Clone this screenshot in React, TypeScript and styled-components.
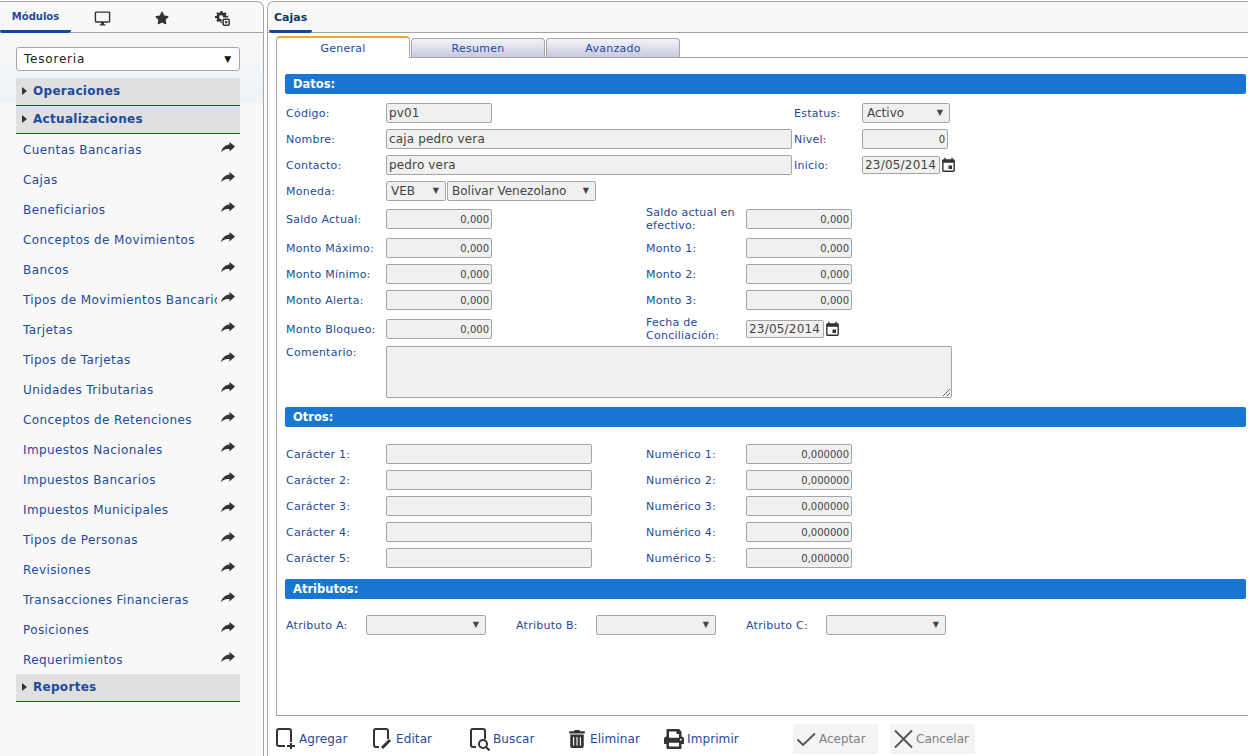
import { ReactNode } from "react";
import styled, { createGlobalStyle } from "styled-components";
import { FaStar, FaPrint, FaTrashAlt } from "react-icons/fa";
import { MdOutlineDesktopWindows, MdEvent } from "react-icons/md";

const GlobalStyle = createGlobalStyle`
  html, body { margin: 0; padding: 0; background: #fff; }
  * { box-sizing: border-box; }
  body { font-family: "DejaVu Sans", Verdana, sans-serif; font-size: 11px; }
`;

const menuItems = [
  "Cuentas Bancarias",
  "Cajas",
  "Beneficiarios",
  "Conceptos de Movimientos",
  "Bancos",
  "Tipos de Movimientos Bancarios",
  "Tarjetas",
  "Tipos de Tarjetas",
  "Unidades Tributarias",
  "Conceptos de Retenciones",
  "Impuestos Nacionales",
  "Impuestos Bancarios",
  "Impuestos Municipales",
  "Tipos de Personas",
  "Revisiones",
  "Transacciones Financieras",
  "Posiciones",
  "Requerimientos",
];

function GearIcon() {
  return (
    <svg width="15" height="15" viewBox="0 0 16 16" fill="#333">
      <path d="M6 0h2l.3 1.7 1.3.5L11 1.2l1.4 1.4-1 1.4.4 1H14v2H8.5V5.5a2.2 2.2 0 1 0-3 3H7V13H6l-.3-1.7-1.3-.5L3 11.8 1.4 10.4l1-1.4-.5-1.3L0 7.4v-2l1.9-.3.5-1.3-1-1.4L2.8 1l1.4 1 1.3-.5z" />
      <rect x="8.7" y="8.7" width="6.4" height="6.4" rx="1" fill="none" stroke="#333" strokeWidth="1.6" />
      <rect x="10.7" y="10.7" width="2.4" height="2.4" />
    </svg>
  );
}

function ShareIcon() {
  return (
    <svg width="14" height="10" viewBox="0 0 14 10" fill="#333">
      <path d="M8.500 0L14 4.500 8.500 9.500V7C5 7 2.500 7.500 0 10 1 6 4 3 8.500 2.500z" />
    </svg>
  );
}

function AddIcon() {
  return (
    <svg width="20" height="22" viewBox="0 0 20 22" fill="none" stroke="#333" strokeWidth="2">
      <path d="M9 18H3a2 2 0 0 1-2-2V3a2 2 0 0 1 2-2h10a2 2 0 0 1 2 2v11" />
      <path d="M15 15v6M11 18h8" />
    </svg>
  );
}

function EditIcon() {
  return (
    <svg width="20" height="22" viewBox="0 0 20 22" fill="none" stroke="#333" strokeWidth="2">
      <path d="M6 19H3a2 2 0 0 1-2-2V3a2 2 0 0 1 2-2h10a2 2 0 0 1 2 2v8" />
      <path d="M9 20l8-8" strokeWidth="3" />
    </svg>
  );
}

function SearchIcon() {
  return (
    <svg width="20" height="23" viewBox="0 0 20 23" fill="none" stroke="#333" strokeWidth="2">
      <path d="M6 19H3a2 2 0 0 1-2-2V3a2 2 0 0 1 2-2h10a2 2 0 0 1 2 2v8" />
      <circle cx="13" cy="16" r="4" />
      <path d="M16 19l3.500 3.500" />
    </svg>
  );
}

function CheckIcon() {
  return (
    <svg width="20" height="20" viewBox="0 0 20 20" fill="none" stroke="#555" strokeWidth="1.9">
      <path d="M1.500 10.500L7 16 19 4.500" />
    </svg>
  );
}

function CrossIcon() {
  return (
    <svg width="20" height="20" viewBox="0 0 20 20" fill="none" stroke="#555" strokeWidth="1.9">
      <path d="M2 1.500L19 18.500M19 1.500L2 18.500" />
    </svg>
  );
}

const SELECT_CARET = "\u25BC";

function Select({ width, value }: { width: number; value: string }) {
  return (
    <SelectBox $width={width}>
      <span>{value}</span>
      <Caret>{SELECT_CARET}</Caret>
    </SelectBox>
  );
}

function DateField({ value }: { value: string }) {
  return (
    <DateWrap>
      <DateInput readOnly value={value} />
      <MdEvent size={17} color="#333" />
    </DateWrap>
  );
}

function Section({ title, children }: { title: string; children?: ReactNode }) {
  return (
    <>
      <SectionBar>{title}</SectionBar>
      <SectionBody>{children}</SectionBody>
    </>
  );
}

export default function App() {
  const amounts: [string, string][] = [
    ["Monto Máximo:", "Monto 1:"],
    ["Monto Mínimo:", "Monto 2:"],
    ["Monto Alerta:", "Monto 3:"],
  ];

  return (
    <>
      <GlobalStyle />
      <Page>
        <Sidebar>
          <SideTabs>
            <ActiveTab>Módulos</ActiveTab>
            <IconTab><MdOutlineDesktopWindows size={17} color="#333" /></IconTab>
            <IconTab><FaStar size={14} color="#333" /></IconTab>
            <IconTab><GearIcon /></IconTab>
          </SideTabs>
          <SideBody>
            <ModuleSelect>
              <span>Tesoreria</span>
              <ModuleCaret>{SELECT_CARET}</ModuleCaret>
            </ModuleSelect>
            <AccordionHead><Tri />Operaciones</AccordionHead>
            <AccordionHead><Tri />Actualizaciones</AccordionHead>
            {menuItems.map((item) => (
              <MenuItem key={item}>
                <MenuText>{item}</MenuText>
                <ShareIcon />
              </MenuItem>
            ))}
            <AccordionHead><Tri />Reportes</AccordionHead>
          </SideBody>
        </Sidebar>

        <Main>
          <MainTabs>
            <MainTab>Cajas</MainTab>
          </MainTabs>
          <Content>
            <FormTabs>
              <FormTab $active>General</FormTab>
              <FormTab>Resumen</FormTab>
              <FormTab>Avanzado</FormTab>
            </FormTabs>
            <FormBody>
              <Section title="Datos:">
                <TopRow>
                  <Label>Código:</Label>
                  <TextInput $width={106} readOnly value="pv01" />
                  <Label>Estatus:</Label>
                  <Select width={88} value="Activo" />
                </TopRow>
                <TopRow>
                  <Label>Nombre:</Label>
                  <TextInput $width={406} readOnly value="caja pedro vera" />
                  <Label>Nivel:</Label>
                  <NumberInput $width={86} readOnly value="0" />
                </TopRow>
                <TopRow>
                  <Label>Contacto:</Label>
                  <TextInput $width={406} readOnly value="pedro vera" />
                  <Label>Inicio:</Label>
                  <DateField value="23/05/2014" />
                </TopRow>
                <TopRow>
                  <Label>Moneda:</Label>
                  <CurrencyPair>
                    <Select width={60} value="VEB" />
                    <Select width={149} value="Bolivar Venezolano" />
                  </CurrencyPair>
                </TopRow>

                <AmountRow $top={8}>
                  <Label>Saldo Actual:</Label>
                  <NumberInput $width={106} readOnly value="0,000" />
                  <WrapLabel>Saldo actual en efectivo:</WrapLabel>
                  <NumberInput $width={106} readOnly value="0,000" />
                </AmountRow>
                {amounts.map(([left, right], i) => (
                  <AmountRow key={left} $top={i === 0 ? 9 : 6}>
                    <Label>{left}</Label>
                    <NumberInput $width={106} readOnly value="0,000" />
                    <Label>{right}</Label>
                    <NumberInput $width={106} readOnly value="0,000" />
                  </AmountRow>
                ))}
                <AmountRow $top={9}>
                  <Label>Monto Bloqueo:</Label>
                  <NumberInput $width={106} readOnly value="0,000" />
                  <WrapLabel>Fecha de Conciliación:</WrapLabel>
                  <DateField value="23/05/2014" />
                </AmountRow>
                <CommentRow>
                  <Label>Comentario:</Label>
                  <Comment readOnly />
                </CommentRow>
              </Section>

              <Section title="Otros:">
                <ExtraRows>
                  {[1, 2, 3, 4, 5].map((n) => (
                    <AmountRow key={n} $top={n === 1 ? 0 : 6}>
                      <Label>{`Carácter ${n}:`}</Label>
                      <TextInput $width={206} readOnly value="" />
                      <Label>{`Numérico ${n}:`}</Label>
                      <NumberInput $width={106} readOnly value="0,000000" />
                    </AmountRow>
                  ))}
                </ExtraRows>
              </Section>

              <Section title="Atributos:">
                <AttrRow>
                  <Label>Atributo A:</Label>
                  <Select width={120} value="" />
                  <Label>Atributo B:</Label>
                  <Select width={120} value="" />
                  <Label>Atributo C:</Label>
                  <Select width={120} value="" />
                </AttrRow>
              </Section>
            </FormBody>
          </Content>
          <Toolbar>
            <ToolButton><ToolIcon><AddIcon /></ToolIcon>Agregar</ToolButton>
            <ToolButton><ToolIcon><EditIcon /></ToolIcon>Editar</ToolButton>
            <ToolButton><ToolIcon><SearchIcon /></ToolIcon>Buscar</ToolButton>
            <ToolButton><ToolIcon><FaTrashAlt size={18} color="#333" /></ToolIcon>Eliminar</ToolButton>
            <ToolButton><ToolIcon><FaPrint size={20} color="#333" /></ToolIcon>Imprimir</ToolButton>
            <ConfirmGroup>
              <DisabledButton><CheckIcon />Aceptar</DisabledButton>
              <DisabledButton><CrossIcon />Cancelar</DisabledButton>
            </ConfirmGroup>
          </Toolbar>
        </Main>
      </Page>
    </>
  );
}

const Page = styled.div`
  display: flex;
  gap: 3px;
  height: 756px;
  width: 1248px;
  overflow: hidden;
  padding-top: 1px;
  background: #fff;
`;

const Sidebar = styled.aside`
  width: 264px;
  flex: none;
  border: 1px solid #a5a5a5;
  border-left: none;
  border-bottom: none;
  border-top-right-radius: 7px;
  background: #f8f8f8;
  display: flex;
  flex-direction: column;
`;

const SideTabs = styled.div`
  height: 31px;
  flex: none;
  display: flex;
  border-bottom: 1px solid #a5a5a5;
`;

const ActiveTab = styled.div`
  width: 71px;
  height: 31px;
  padding-top: 9px;
  text-align: center;
  font-size: 10px;
  font-weight: 700;
  color: #24499a;
  border-bottom: 3px solid #0d47a1;
  border-radius: 0 0 3px 3px;
  margin-right: 1px;
`;

const IconTab = styled.div`
  width: 60px;
  display: flex;
  align-items: center;
  justify-content: center;
  padding-top: 2px;
`;

const SideBody = styled.div`
  flex: 1;
  padding: 14px 23px 0 16px;
  background: linear-gradient(#f8f8f8, #eef3f8) no-repeat 0 0 / 100% 70px;
`;

const ModuleSelect = styled.div`
  height: 24px;
  margin-bottom: 7px;
  padding: 0 7px;
  display: flex;
  align-items: center;
  justify-content: space-between;
  font-size: 12px;
  letter-spacing: 0.8px;
  color: #222;
  background: #fff;
  border: 1px solid #a5a5a5;
  border-radius: 3px;
`;

const ModuleCaret = styled.span`
  font-size: 9px;
  color: #111;
`;

const AccordionHead = styled.div`
  height: 28px;
  display: flex;
  align-items: center;
  gap: 6px;
  padding: 0 0 1px 6px;
  font-size: 12px;
  font-weight: 700;
  letter-spacing: 0.3px;
  color: #1c4a9c;
  background: #e0e0e0;
  border-bottom: 1px solid #0d47a1;
`;

const Tri = styled.i`
  width: 0;
  height: 0;
  border-left: 5px solid #333;
  border-top: 4px solid transparent;
  border-bottom: 4px solid transparent;
`;

const MenuItem = styled.div`
  height: 30px;
  display: flex;
  align-items: center;
  justify-content: space-between;
  padding: 2px 5px 0 7px;
  font-size: 12px;
  color: #24499a;

  & > svg {
    flex: none;
    margin: -7px 0 0 -6px;
  }
`;

const MenuText = styled.span`
  width: 194px;
  overflow: hidden;
  white-space: nowrap;
  letter-spacing: 0.4px;
`;

const Main = styled.main`
  flex: 1;
  min-width: 0;
  display: flex;
  flex-direction: column;
  border-left: 1px solid #a5a5a5;
  border-top: 1px solid #a5a5a5;
  border-top-left-radius: 7px;
  background: #fff;
`;

const MainTabs = styled.div`
  height: 31px;
  flex: none;
  display: flex;
  padding-left: 1px;
  background: #f8f8f8;
  border-bottom: 1px solid #a5a5a5;
  border-top-left-radius: 7px;
`;

const MainTab = styled.div`
  width: 43px;
  height: 31px;
  padding: 9px 0 0 5px;
  font-size: 11px;
  font-weight: 700;
  color: #17375e;
  border-bottom: 3px solid #0d47a1;
  border-radius: 0 0 3px 3px;
`;

const Content = styled.div`
  flex: 1;
  min-height: 0;
  margin: 5px 0 0 8px;
  display: flex;
  flex-direction: column;
`;

const FormTabs = styled.div`
  height: 20px;
  flex: none;
  display: flex;
  align-items: flex-end;
  gap: 1px;
  border-bottom: 1px solid #a5a5a5;
`;

const FormTab = styled.div<{ $active?: boolean }>`
  width: 134px;
  height: ${(p) => (p.$active ? "22px" : "19px")};
  padding-top: ${(p) => (p.$active ? "4px" : "3px")};
  margin-bottom: ${(p) => (p.$active ? "-1px" : "0")};
  text-align: center;
  font-size: 11px;
  letter-spacing: 0.25px;
  color: #24499a;
  border: 1px solid #a5a5a5;
  border-bottom: none;
  border-radius: 4px 4px 0 0;
  border-top: ${(p) => (p.$active ? "2px solid #f5a623" : "1px solid #a5a5a5")};
  background: ${(p) => (p.$active ? "#fff" : "linear-gradient(#f4f4fa, #c9c9e0)")};
`;

const FormBody = styled.div`
  flex: 1;
  min-height: 0;
  padding: 16px 2px 0 8px;
  background: #fff;
  border-left: 1px solid #a5a5a5;
  border-bottom: 1px solid #a5a5a5;
`;

const SectionBar = styled.div`
  height: 20px;
  padding: 3px 0 0 8px;
  font-size: 11.5px;
  font-weight: 700;
  color: #fff;
  background: #1976d2;
  border-radius: 2px;
`;

const SectionBody = styled.div`
  padding-top: 3px;
`;

const Label = styled.label`
  font-size: 11px;
  letter-spacing: 0.25px;
  color: #24499a;
  white-space: nowrap;
`;

const WrapLabel = styled(Label)`
  white-space: normal;
  line-height: 13px;
  width: 96px;
`;

const FieldRow = styled.div`
  display: grid;
  grid-template-rows: 20px;
  align-items: center;
  padding-left: 1px;
`;

const TopRow = styled(FieldRow)`
  grid-template-columns: 100px 408px 68px 1fr;
  height: 20px;
  margin-top: 6px;
`;

const AmountRow = styled(FieldRow)<{ $top: number }>`
  grid-template-columns: 100px 260px 100px 1fr;
  height: 20px;
  margin-top: ${(p) => p.$top}px;
`;

const CommentRow = styled(FieldRow)`
  grid-template-columns: 100px 1fr;
  grid-template-rows: 52px;
  align-items: start;
  margin-top: 7px;
  margin-bottom: 9px;
`;

const ExtraRows = styled.div`
  padding-top: 14px;
  margin-bottom: 11px;
`;

const AttrRow = styled(FieldRow)`
  grid-template-columns: 80px 150px 80px 150px 80px 1fr;
  height: 20px;
  margin-top: 13px;
`;

const inputBase = `
  height: 20px;
  padding: 0 2px;
  font-family: "DejaVu Sans", Verdana, sans-serif;
  background: #f0f0f0;
  border: 1px solid #a5a5a5;
  border-radius: 2px;
  outline: none;
`;

const TextInput = styled.input<{ $width: number }>`
  ${inputBase}
  width: ${(p) => p.$width}px;
  font-size: 12px;
  letter-spacing: 0.15px;
  color: #444;
`;

const NumberInput = styled.input<{ $width: number }>`
  ${inputBase}
  width: ${(p) => p.$width}px;
  text-align: right;
  font-size: 10px;
  color: #444;
`;

const SelectBox = styled.div<{ $width: number }>`
  width: ${(p) => p.$width}px;
  height: 20px;
  display: flex;
  align-items: center;
  justify-content: space-between;
  padding: 0 6px 0 4px;
  background: #f0f0f0;
  border: 1px solid #a5a5a5;
  border-radius: 2px;
  font-size: 12px;
  color: #444;
`;

const Caret = styled.span`
  font-size: 8px;
  color: #444;
  margin-top: -2px;
  margin-left: auto;
`;

const CurrencyPair = styled.div`
  display: flex;
  gap: 1px;
`;

const DateWrap = styled.div`
  display: flex;
  align-items: center;
`;

const DateInput = styled.input`
  ${inputBase}
  width: 78px;
  height: 18px;
  padding: 0 1px 0 2px;
  font-size: 12px;
  letter-spacing: 0.2px;
  color: #444;
`;

const Comment = styled.textarea`
  ${inputBase}
  display: block;
  width: 566px;
  height: 52px;
`;

const Toolbar = styled.div`
  height: 40px;
  flex: none;
  display: flex;
  align-items: center;
  padding: 6px 0 0 8px;
  background: #fff;
`;

const ToolButton = styled.div`
  width: 97px;
  display: flex;
  align-items: center;
  gap: 3px;
  font-size: 12px;
  letter-spacing: 0.1px;
  color: #24499a;
`;

const ToolIcon = styled.span`
  display: inline-flex;
  align-items: center;
  justify-content: center;
  width: 20px;
`;

const ConfirmGroup = styled.div`
  display: flex;
  gap: 12px;
  margin-left: 32px;
`;

const DisabledButton = styled.div`
  width: 85px;
  height: 30px;
  display: flex;
  align-items: center;
  gap: 3px;
  padding-left: 3px;
  font-size: 12px;
  color: #808080;
  background: #f4f4f4;
  border-radius: 2px;
`;
